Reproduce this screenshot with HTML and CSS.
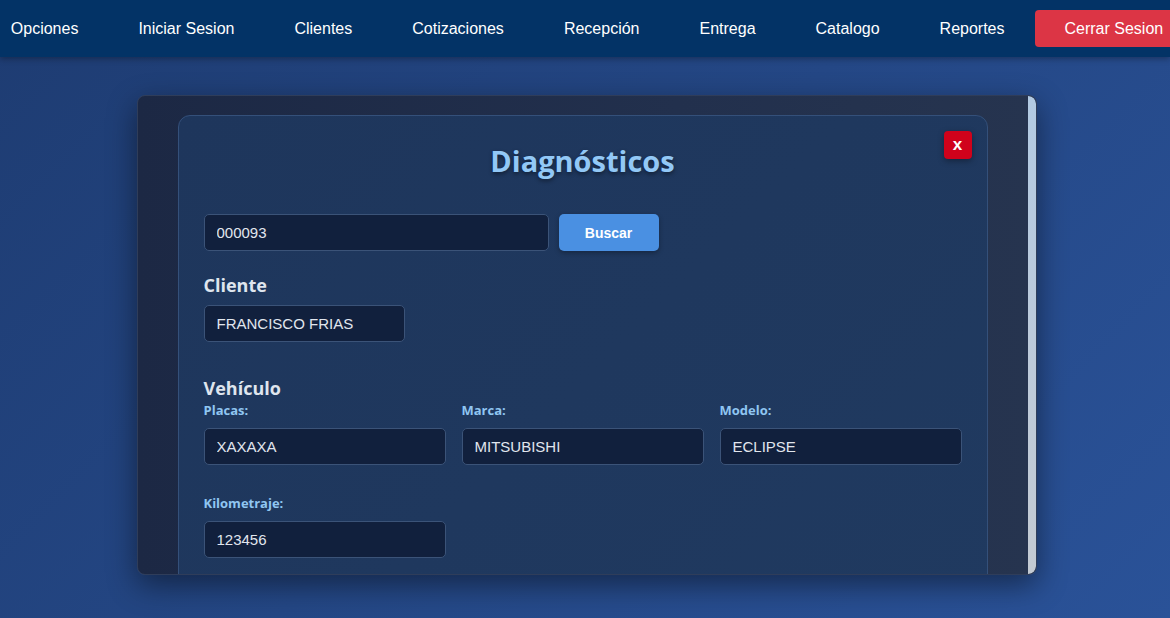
FILE: index.html
```html
<!DOCTYPE html>
<html lang="es">
<head>
<meta charset="utf-8">
<title>Diagnósticos</title>
<link rel="stylesheet" href="styles.css">
</head>
<body>
<nav class="nav">
  <a class="nav-link">Opciones</a>
  <a class="nav-link">Iniciar Sesion</a>
  <a class="nav-link">Clientes</a>
  <a class="nav-link">Cotizaciones</a>
  <a class="nav-link">Recepción</a>
  <a class="nav-link">Entrega</a>
  <a class="nav-link">Catalogo</a>
  <a class="nav-link">Reportes</a>
  <a class="nav-link nav-logout">Cerrar Sesion</a>
</nav>
<main class="page">
  <div class="modal">
    <div class="modal-body">
      <div class="card">
        <button class="close-btn">x</button>
        <h2 class="title">Diagnósticos</h2>
        <div class="search-row">
          <input class="field search-input" value="000093">
          <button class="search-btn">Buscar</button>
        </div>
        <h3 class="section">Cliente</h3>
        <input class="field client-input" value="FRANCISCO FRIAS">
        <h3 class="section section-vehicle">Vehículo</h3>
        <div class="grid">
          <div class="group">
            <label class="label">Placas:</label>
            <input class="field" value="XAXAXA">
          </div>
          <div class="group">
            <label class="label">Marca:</label>
            <input class="field" value="MITSUBISHI">
          </div>
          <div class="group">
            <label class="label">Modelo:</label>
            <input class="field" value="ECLIPSE">
          </div>
          <div class="group">
            <label class="label">Kilometraje:</label>
            <input class="field" value="123456">
          </div>
        </div>
        <div class="spacer"></div>
      </div>
    </div>
    <div class="scrollbar"></div>
  </div>
</main>
</body>
</html>
```
FILE: styles.css
```css
* { box-sizing: border-box; }
html, body { margin: 0; height: 100%; }
body {
  background: linear-gradient(135deg, #1e3c72 0%, #2a5298 100%);
  font-family: "Liberation Sans", Arial, sans-serif;
  overflow: hidden;
}
.nav {
  height: 57px;
  background: #033366;
  display: flex;
  justify-content: center;
  align-items: center;
  padding-left: 4px;
  box-shadow: 0 2px 6px rgba(0,0,0,0.3);
  position: relative;
  z-index: 2;
}
.nav-link {
  flex-shrink: 0;
  color: #fff;
  font-size: 16px;
  padding: 0 30px;
  line-height: 37px;
  white-space: nowrap;
}
.nav-logout {
  background: #dc3545;
  border-radius: 4px;
}
.page {
  padding-top: 38px;
  display: flex;
  justify-content: center;
}
.modal {
  width: 900px;
  height: 480px;
  margin-left: 3px;
  display: flex;
  background: linear-gradient(90deg, #1c2844 0%, #22304d 60%, #26344f 100%);
  border: 1px solid #2f3d5a;
  border-radius: 8px;
  overflow: hidden;
  box-shadow: 0 10px 30px rgba(0,0,0,0.45);
}
.modal-body {
  flex: 1;
  min-width: 0;
  padding: 19px 40px 0 40px;
  overflow: hidden;
}
.scrollbar {
  width: 8px;
  flex-shrink: 0;
  background: linear-gradient(180deg, #b2cae3 0%, #bccadb 50%, #c3cad3 100%);
  border-radius: 0 8px 8px 0;
}
.card {
  position: relative;
  background: linear-gradient(135deg, #1e365c 0%, #203a60 100%);
  border: 1px solid #34507a;
  border-radius: 12px;
  padding: 26px 25px 40px 25px;
}
.close-btn {
  position: absolute;
  top: 15px;
  right: 15px;
  width: 28px;
  height: 28px;
  border: none;
  border-radius: 4px;
  background: #d0021b;
  color: #fff;
  font-family: "Liberation Sans", Arial, sans-serif;
  font-weight: bold;
  font-size: 17px;
  line-height: 26px;
  padding: 0;
  box-shadow: 0 2px 6px rgba(0,0,0,0.35);
}
.title {
  margin: 0;
  text-align: center;
  font-family: "Open Sans", "Noto Sans", sans-serif;
  font-weight: 700;
  font-size: 29px;
  line-height: 38px;
  color: #92c8f6;
  text-shadow: 0 2px 4px rgba(0,0,0,0.45);
}
.search-row {
  margin-top: 34px;
  display: flex;
  gap: 10px;
}
.field {
  display: block;
  height: 37px;
  background: #11203d;
  border: 1px solid #3b5378;
  border-radius: 5px;
  color: #e1e6ee;
  font-family: "Liberation Sans", Arial, sans-serif;
  font-size: 15px;
  padding: 0 12px;
  width: 100%;
  outline: none;
}
.search-input { width: 345px; }
.search-btn {
  width: 100px;
  height: 37px;
  border: none;
  border-radius: 5px;
  background: #4a90e2;
  color: #fff;
  font-family: "Liberation Sans", Arial, sans-serif;
  font-weight: bold;
  font-size: 14px;
  box-shadow: 0 2px 5px rgba(0,0,0,0.3);
}
.section {
  margin: 22px 0 8px 0;
  font-family: "Open Sans", "Noto Sans", sans-serif;
  font-weight: 700;
  font-size: 18px;
  line-height: 24px;
  color: #dfe5ee;
}
.client-input { width: 201px; }
.section-vehicle { margin: 34px 0 2px 0; }
.grid {
  display: grid;
  grid-template-columns: repeat(3, 1fr);
  column-gap: 16px;
  row-gap: 30px;
}
.group { display: flex; flex-direction: column; }
.label {
  font-family: "Open Sans", "Noto Sans", sans-serif;
  font-weight: 700;
  font-size: 13px;
  line-height: 16px;
  color: #90c6f2;
  margin-bottom: 10px;
}
.spacer { height: 60px; }
```
